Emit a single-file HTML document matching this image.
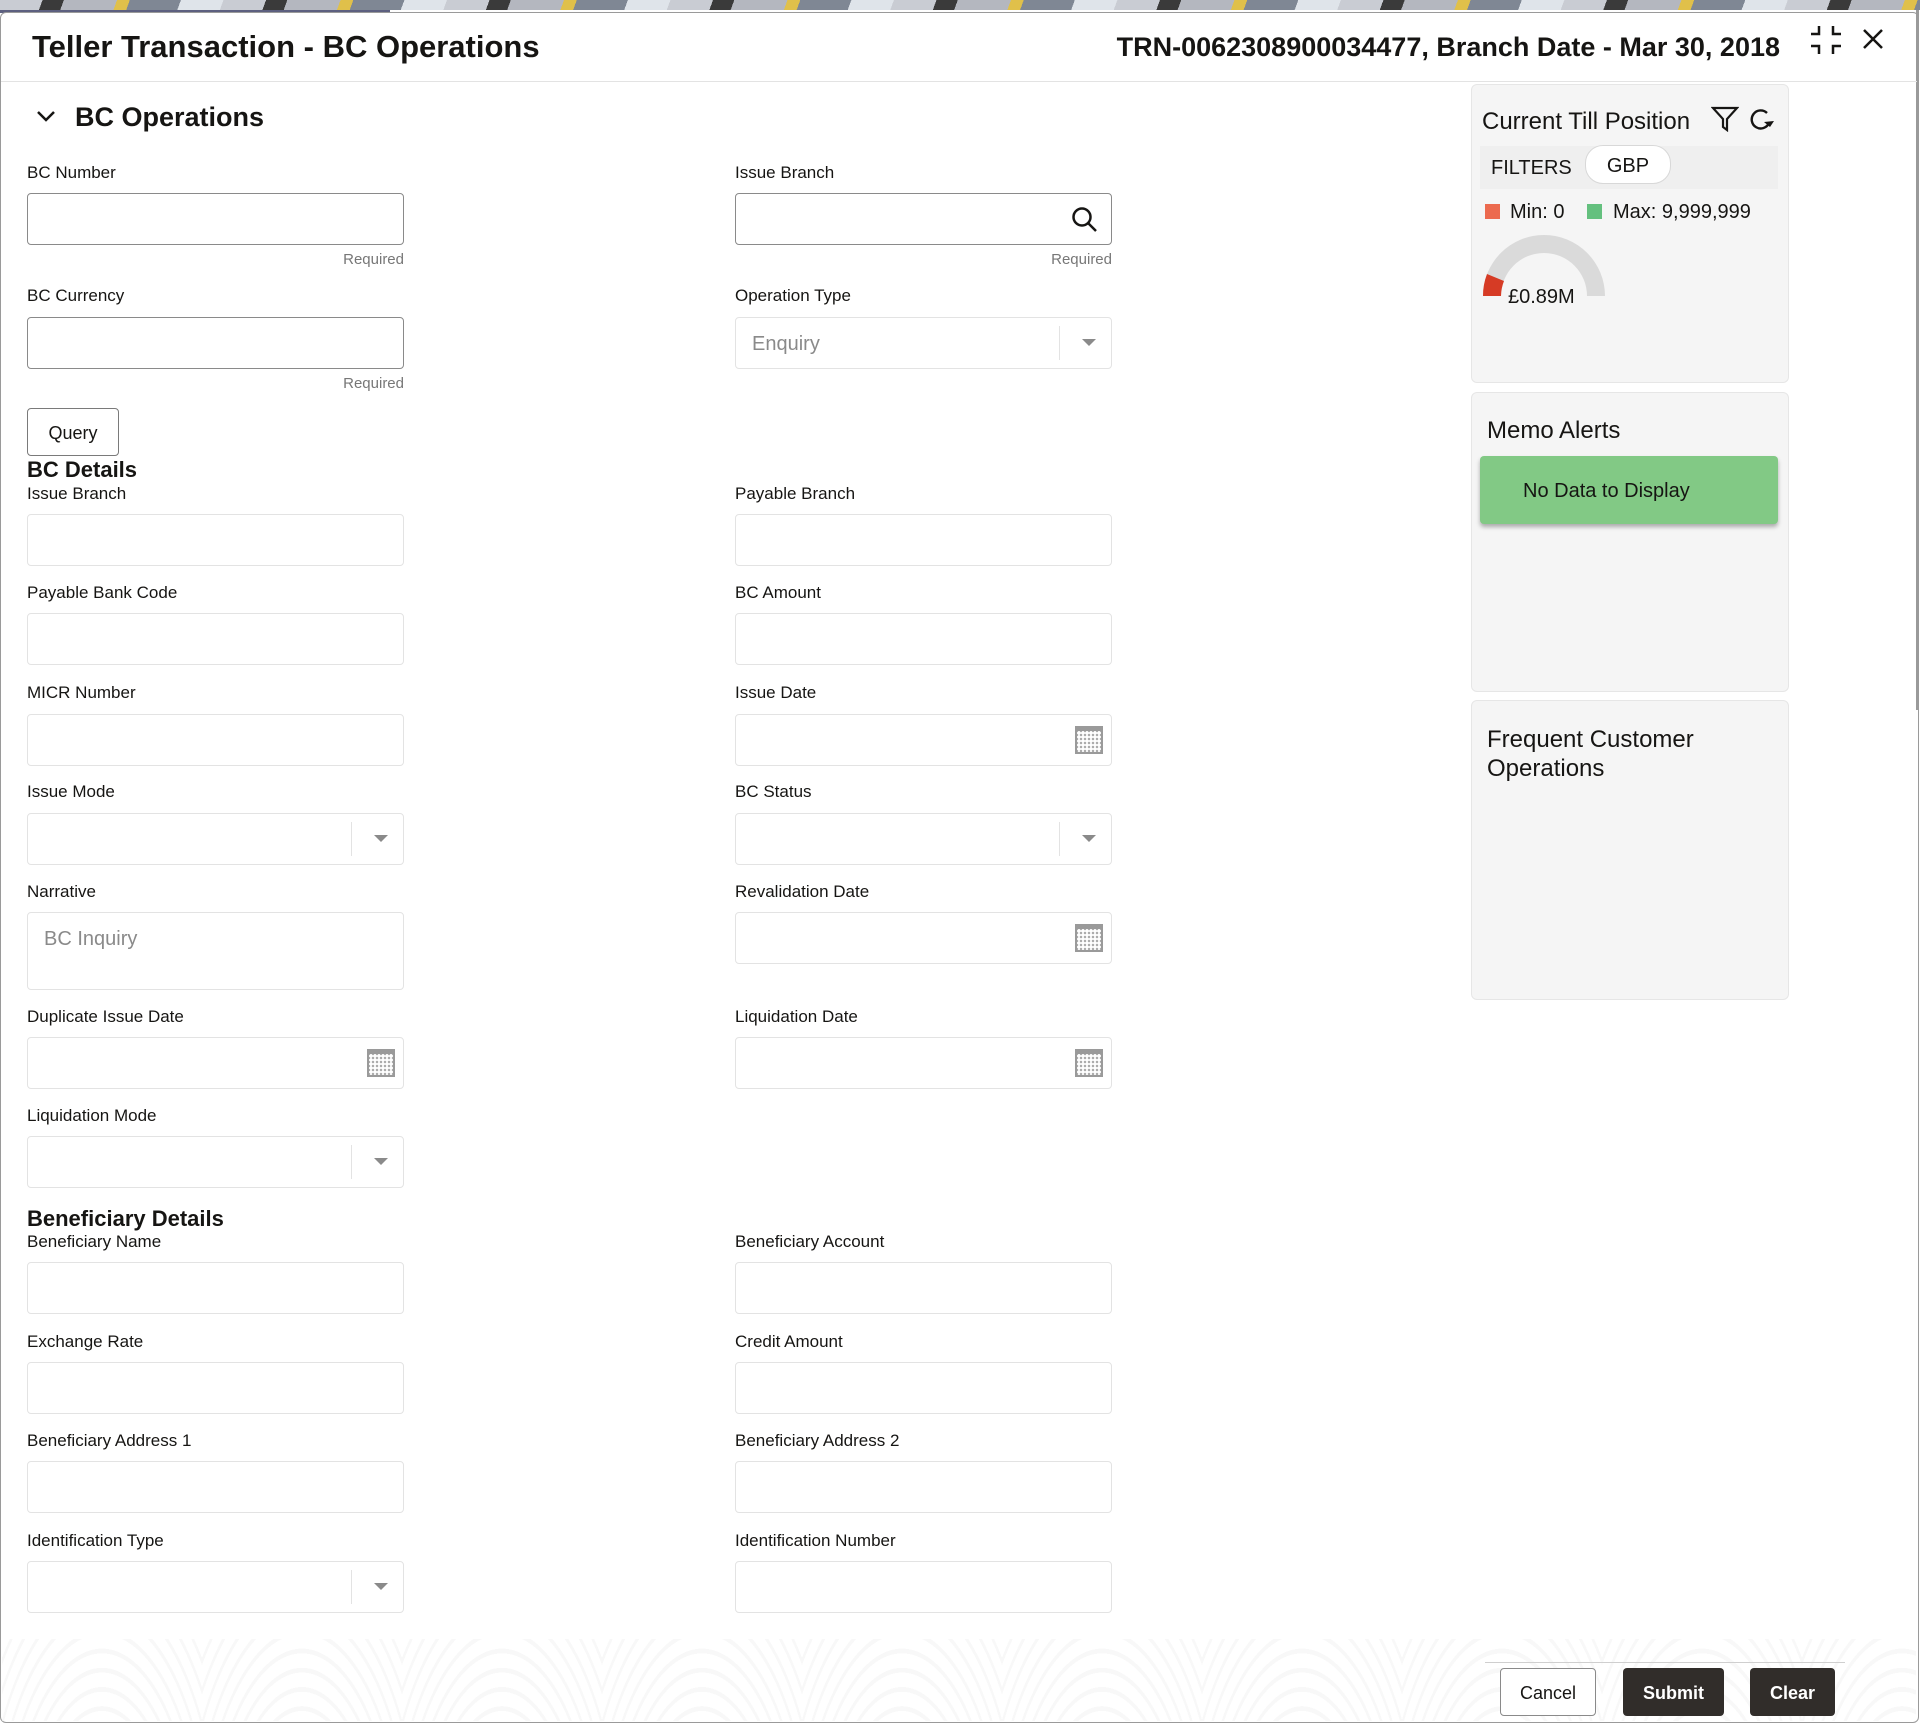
<!DOCTYPE html>
<html><head><meta charset="utf-8"><style>
*{box-sizing:border-box;margin:0;padding:0}
body{width:1920px;height:1724px;position:relative;background:#fff;font-family:"Liberation Sans",sans-serif;color:#161513;overflow:hidden}
.a{position:absolute}
.lbl{position:absolute;font-size:17px;color:#161513;white-space:nowrap;margin-top:2px}
.in{position:absolute;width:377px;height:52px;border:1px solid #e3e3e3;border-radius:4px;background:#fff}
.req{border-color:#8a8a8a}
.rq{position:absolute;font-size:15px;color:#777;text-align:right;width:377px;margin-top:1px}
.dd:after{content:"";position:absolute;right:15px;top:21px;border-left:7px solid transparent;border-right:7px solid transparent;border-top:7px solid #8a8a8a}
.dd:before{content:"";position:absolute;right:51px;top:8px;bottom:8px;border-left:1px solid #e3e3e3}
.cal{position:absolute;right:8px;top:11px;width:28px;height:28px;border:2px solid #9a9a9a;border-top-width:5px;background:radial-gradient(circle,#aaa 1px,transparent 1.5px) 2px 2px/4px 4px,#fff}
.card{position:absolute;left:1471px;width:318px;background:#f5f5f5;border:1px solid #e6e6e6;border-radius:6px}
.h3{position:absolute;font-size:22px;font-weight:bold;white-space:nowrap}
</style></head><body>
<div class="a" style="left:0;top:0;width:1920px;height:10px;background:repeating-linear-gradient(110deg,#c9ccd3 0 40px,#3a3a3a 40px 60px,#b4b7bf 60px 110px,#e0c04a 110px 122px,#7f8794 122px 170px,#dfe4ea 170px 210px)"></div>
<div class="a" style="left:0;top:10px;width:390px;height:3px;background:#5d6080"></div>
<div class="a" style="left:0;top:12px;width:1919px;height:1711px;border:1px solid #9a9a9a;border-radius:6px"></div>
<div class="a" style="left:1916px;top:10px;width:3px;height:700px;background:#9a9a9a"></div>
<div class="a" style="left:32px;top:29px;font-size:31px;font-weight:bold">Teller Transaction - BC Operations</div>
<div class="a" style="left:1114px;top:32px;font-size:27px;font-weight:bold;white-space:nowrap;width:666px;text-align:right">TRN-0062308900034477, Branch Date - Mar 30, 2018</div>
<svg class="a" style="left:1808px;top:22px" width="36" height="36" viewBox="0 0 36 36" fill="none" stroke="#161513" stroke-width="2.5"><path d="M3 12H11V4M25 4V12H33M3 24H11V32M25 32V24H33"/></svg>
<svg class="a" style="left:1862px;top:28px" width="22" height="22" viewBox="0 0 22 22" stroke="#161513" stroke-width="2.5"><path d="M2 2L20 20M20 2L2 20"/></svg>
<div class="a" style="left:1px;top:81px;width:1916px;height:1px;background:#e3e3e3"></div>

<svg class="a" style="left:36px;top:109px" width="20" height="14" viewBox="0 0 20 14" fill="none" stroke="#161513" stroke-width="2.5"><path d="M2 3L10 11L18 3"/></svg>
<div class="a" style="left:75px;top:102px;font-size:27px;font-weight:bold">BC Operations</div>

<div class="lbl" style="left:27px;top:161px">BC Number</div>
<div class="in req" style="left:27px;top:193px"></div>
<div class="rq" style="left:27px;top:250px">Required</div>
<div class="lbl" style="left:735px;top:161px">Issue Branch</div>
<div class="in req" style="left:735px;top:193px"><svg class="a" style="right:12px;top:12px" width="28" height="28" viewBox="0 0 28 28" fill="none" stroke="#161513" stroke-width="2.5"><circle cx="11" cy="11" r="8.5"/><path d="M17 17L25 25"/></svg></div>
<div class="rq" style="left:735px;top:250px">Required</div>

<div class="lbl" style="left:27px;top:284px">BC Currency</div>
<div class="in req" style="left:27px;top:317px"></div>
<div class="rq" style="left:27px;top:374px">Required</div>
<div class="lbl" style="left:735px;top:284px">Operation Type</div>
<div class="in dd" style="left:735px;top:317px"><span class="a" style="left:16px;top:15px;font-size:20px;color:#8a8a8a">Enquiry</span></div>

<div class="a" style="left:27px;top:408px;width:92px;height:48px;border:1px solid #7a7a7a;border-radius:4px;font-size:18px;text-align:center;line-height:48px">Query</div>
<div class="h3" style="left:27px;top:457px">BC Details</div>

<div class="lbl" style="left:27px;top:482px">Issue Branch</div><div class="in" style="left:27px;top:514px"></div>
<div class="lbl" style="left:735px;top:482px">Payable Branch</div><div class="in" style="left:735px;top:514px"></div>
<div class="lbl" style="left:27px;top:581px">Payable Bank Code</div><div class="in" style="left:27px;top:613px"></div>
<div class="lbl" style="left:735px;top:581px">BC Amount</div><div class="in" style="left:735px;top:613px"></div>
<div class="lbl" style="left:27px;top:681px">MICR Number</div><div class="in" style="left:27px;top:714px"></div>
<div class="lbl" style="left:735px;top:681px">Issue Date</div><div class="in" style="left:735px;top:714px"><div class="cal"></div></div>
<div class="lbl" style="left:27px;top:780px">Issue Mode</div><div class="in dd" style="left:27px;top:813px"></div>
<div class="lbl" style="left:735px;top:780px">BC Status</div><div class="in dd" style="left:735px;top:813px"></div>
<div class="lbl" style="left:27px;top:880px">Narrative</div><div class="in" style="left:27px;top:912px;height:78px"><span class="a" style="left:16px;top:15px;font-size:20px;color:#8a8a8a">BC Inquiry</span></div>
<div class="lbl" style="left:735px;top:880px">Revalidation Date</div><div class="in" style="left:735px;top:912px"><div class="cal"></div></div>
<div class="lbl" style="left:27px;top:1005px">Duplicate Issue Date</div><div class="in" style="left:27px;top:1037px"><div class="cal"></div></div>
<div class="lbl" style="left:735px;top:1005px">Liquidation Date</div><div class="in" style="left:735px;top:1037px"><div class="cal"></div></div>
<div class="lbl" style="left:27px;top:1104px">Liquidation Mode</div><div class="in dd" style="left:27px;top:1136px"></div>

<div class="h3" style="left:27px;top:1206px">Beneficiary Details</div>
<div class="lbl" style="left:27px;top:1230px">Beneficiary Name</div><div class="in" style="left:27px;top:1262px"></div>
<div class="lbl" style="left:735px;top:1230px">Beneficiary Account</div><div class="in" style="left:735px;top:1262px"></div>
<div class="lbl" style="left:27px;top:1330px">Exchange Rate</div><div class="in" style="left:27px;top:1362px"></div>
<div class="lbl" style="left:735px;top:1330px">Credit Amount</div><div class="in" style="left:735px;top:1362px"></div>
<div class="lbl" style="left:27px;top:1429px">Beneficiary Address 1</div><div class="in" style="left:27px;top:1461px"></div>
<div class="lbl" style="left:735px;top:1429px">Beneficiary Address 2</div><div class="in" style="left:735px;top:1461px"></div>
<div class="lbl" style="left:27px;top:1529px">Identification Type</div><div class="in dd" style="left:27px;top:1561px"></div>
<div class="lbl" style="left:735px;top:1529px">Identification Number</div><div class="in" style="left:735px;top:1561px"></div>

<div class="card" style="top:84px;height:299px"></div>
<div class="a" style="left:1482px;top:108px;font-size:24px;white-space:nowrap">Current Till Position</div>
<svg class="a" style="left:1711px;top:106px" width="28" height="26" viewBox="0 0 28 26" fill="none" stroke="#161513" stroke-width="2.2"><path d="M2 2H26L16 13V24L12 21V13Z"/></svg>
<svg class="a" style="left:1747px;top:107px" width="28" height="26" viewBox="0 0 28 26" fill="none" stroke="#161513" stroke-width="2.4"><path d="M22 16A9 9 0 1 1 20 6"/><path d="M17 15L23 20L27 14Z" fill="#161513" stroke="none"/></svg>
<div class="a" style="left:1480px;top:146px;width:298px;height:43px;background:#efefef"></div>
<div class="a" style="left:1491px;top:157px;font-size:20px">FILTERS</div>
<div class="a" style="left:1585px;top:145px;width:86px;height:39px;background:#fff;border:1px solid #d8d8d8;border-radius:18px;font-size:20px;text-align:center;line-height:41px">GBP</div>
<div class="a" style="left:1485px;top:204px;width:15px;height:15px;background:#ec6a4f"></div>
<div class="a" style="left:1510px;top:201px;font-size:20px">Min: 0</div>
<div class="a" style="left:1587px;top:204px;width:15px;height:15px;background:#64c07e"></div>
<div class="a" style="left:1613px;top:201px;font-size:20px;white-space:nowrap">Max: 9,999,999</div>
<svg class="a" style="left:1480px;top:230px" width="130" height="70" viewBox="0 0 130 70"><path d="M3 66A61 61 0 0 1 125 66H107A43 43 0 0 0 21 66Z" fill="#dadada"/><path d="M3 66A61 61 0 0 1 7 44L24 51A43 43 0 0 0 21 66Z" fill="#d63b25"/></svg>
<div class="a" style="left:1508px;top:286px;font-size:20px">£0.89M</div>

<div class="card" style="top:392px;height:300px"></div>
<div class="a" style="left:1487px;top:417px;font-size:24px">Memo Alerts</div>
<div class="a" style="left:1480px;top:456px;width:298px;height:68px;background:#82c985;border-radius:4px;box-shadow:0 3px 4px rgba(0,0,0,.3);font-size:20px;line-height:70px;padding-left:43px">No Data to Display</div>

<div class="card" style="top:700px;height:300px"></div>
<div class="a" style="left:1487px;top:725px;font-size:24px;line-height:29px">Frequent Customer<br>Operations</div>

<div class="a" style="left:2px;top:1639px;width:1914px;height:82px;background:repeating-radial-gradient(ellipse at 50% 120%,#fff 0 6px,#f4f4f4 6px 8px);background-size:200px 200px;opacity:.6"></div>
<div class="a" style="left:1485px;top:1662px;width:360px;height:1px;background:#cfcfcf"></div>
<div class="a" style="left:1500px;top:1668px;width:96px;height:48px;border:1px solid #8a8a8a;border-radius:4px;background:#fff;font-size:18px;text-align:center;line-height:48px">Cancel</div>
<div class="a" style="left:1623px;top:1668px;width:101px;height:48px;background:#312d2a;border-radius:4px;color:#fff;font-weight:bold;font-size:18px;text-align:center;line-height:50px">Submit</div>
<div class="a" style="left:1750px;top:1668px;width:85px;height:48px;background:#312d2a;border-radius:4px;color:#fff;font-weight:bold;font-size:18px;text-align:center;line-height:50px">Clear</div>
</body></html>
